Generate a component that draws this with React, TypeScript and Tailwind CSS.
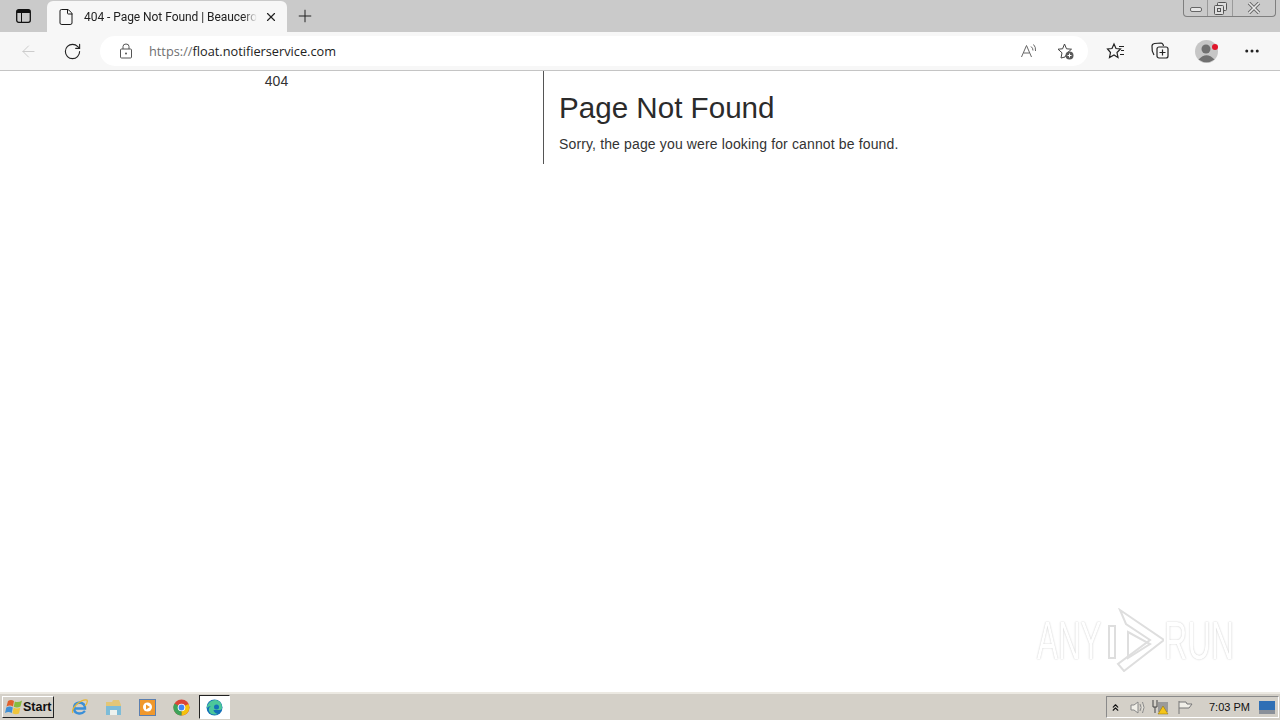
import { RotateCw, ArrowLeft, X, Plus, File, MoreHorizontal, ChevronsUp } from "lucide-react";

function StartFlag() {
  return (
    <svg className="shrink-0" width="17" height="16" viewBox="0 0 17 16" aria-hidden>
      <path d="M3 2 Q6 0 9 2 L8 7.500 Q5 5.500 1.500 7.500 Z" fill="#e0602c" />
      <path d="M9.800 2.500 Q13 4 17 1.500 L15.500 7.500 Q12 9.500 8.800 7.800 Z" fill="#86bb3f" />
      <path d="M1.300 8.500 Q5 6.500 7.800 8.500 L6.800 14 Q3.500 12 0 14 Z" fill="#3f8fd6" />
      <path d="M8.600 8.800 Q12 10.500 15.300 8.500 L14 14.500 Q10.500 16 7.500 14.300 Z" fill="#efc53c" />
    </svg>
  );
}

function WindowControls() {
  return (
    <div className="ml-auto mr-[4px] flex h-[17px] items-center self-start rounded-b-[4px] border border-t-0 border-[#7f7f7f]">
      <div className="flex h-full w-[24px] items-center justify-center border-r border-[#9a9a9a]">
        <span className="mt-[2px] h-[5px] w-[12px] rounded-[2px] border border-[#666] bg-[#e6e6e6]" />
      </div>
      <div className="flex h-full w-[25px] items-center justify-center border-r border-[#9a9a9a]">
        <svg width="13" height="13" viewBox="0 0 13 13" fill="#dedede" stroke="#555" aria-hidden>
          <rect x="3.500" y="0.500" width="9" height="8" rx="1" />
          <rect x="0.500" y="3.500" width="9" height="9" rx="1" />
          <rect x="3.500" y="6.500" width="3" height="3" />
        </svg>
      </div>
      <div className="flex h-full w-[42px] items-center justify-center">
        <svg width="14" height="12" viewBox="0 0 14 12" fill="none" aria-hidden>
          <path d="M2 1 L12 11 M12 1 L2 11" stroke="#666" strokeWidth="3.400" />
          <path d="M2 1 L12 11 M12 1 L2 11" stroke="#e8e8e8" strokeWidth="1.600" />
        </svg>
      </div>
    </div>
  );
}

function BrowserBar() {
  return (
    <div className="h-[71px] shrink-0 border-b border-[#c4c4c4] bg-[#f7f7f7]">
      <div className="flex h-8 items-end bg-[#cacaca]">
        <div className="flex h-8 w-[47px] items-center justify-center">
          <svg width="15" height="14" viewBox="0 0 15 14" fill="none" stroke="#111" aria-hidden>
            <rect x="0.700" y="0.700" width="13.600" height="12.600" rx="2" strokeWidth="1.300" />
            <path d="M1 2.500 H14" strokeWidth="3" />
            <path d="M5.500 3 V13" />
          </svg>
        </div>
        <div className="flex h-[31px] w-[240px] items-center rounded-t-md bg-[#f7f7f7] pl-[10px] pr-[9px]">
          <File size={18} strokeWidth={1.3} className="shrink-0 text-[#111]" />
          <span className="ml-[9px] w-[173px] overflow-hidden text-[12px] tracking-[-0.05px] whitespace-nowrap text-[#222] font-['Roboto',sans-serif] [mask-image:linear-gradient(90deg,#000_92%,transparent)]">
            404 - Page Not Found | Beaucero
          </span>
          <X size={14} strokeWidth={2} className="ml-auto text-[#222]" />
        </div>
        <div className="flex h-8 w-[36px] items-center justify-center">
          <Plus size={20} strokeWidth={1.2} className="text-[#222]" />
        </div>
        <WindowControls />
      </div>
      <div className="flex h-[38px] items-center">
        <div className="flex w-[100px] items-center">
          <ArrowLeft size={19} strokeWidth={1.2} className="ml-[19px] text-[#c9c9c9]" />
          <RotateCw size={19} strokeWidth={1.4} className="ml-[25px] text-[#222]" />
        </div>
        <div className="flex h-[30px] w-[988px] items-center rounded-full bg-white pl-[19px] pr-[13px]">
          <svg width="14" height="16" viewBox="0 0 14 16" fill="none" stroke="#555" aria-hidden>
            <rect x="1.500" y="6" width="11" height="9" rx="1" />
            <path d="M4 6 V3.500 Q4 1 7 1 Q10 1 10 3.500 V6" />
            <circle cx="7" cy="10.500" r="1" fill="#555" stroke="none" />
          </svg>
          <span className="ml-[16px] mt-[2px] text-[12.75px] text-[#222] font-['Open_Sans',sans-serif]">
            <span className="text-[#6f6f6f]">https://</span>float.notifierservice.com
          </span>
          <svg className="ml-auto" width="18" height="16" viewBox="0 0 18 16" fill="none" stroke="#666" strokeWidth="1" aria-hidden>
            <path d="M1.500 14 L6.500 2.500 L11.500 14 M3.500 10 H9.500 M11 3.500 Q13 5 13 7.500 M13.500 1.500 Q16 4 15.500 8" />
          </svg>
          <svg className="ml-[18px]" width="19" height="19" viewBox="0 0 19 19" fill="none" stroke="#444" strokeWidth="1" aria-hidden>
            <path d="M8.500 2 L10.500 6.800 L15.500 7.200 L11.700 10.500 L9 15 L5 16 L6 10.800 L2 7.200 L6.600 6.800 Z" />
            <circle cx="13.500" cy="13.500" r="4" fill="#5a5a5a" stroke="none" />
            <path d="M13.500 11.500 V15.500 M11.500 13.500 H15.500" stroke="#fff" />
          </svg>
        </div>
        <div className="flex flex-1 items-center">
          <svg className="ml-[18px]" width="20" height="18" viewBox="0 0 20 18" fill="none" stroke="#222" strokeWidth="1.200" aria-hidden>
            <path d="M8 2 L10 6.500 L14.500 7 L11 10.500 L12 15.500 L8 13 L3.500 15.500 L4.500 10.500 L1.500 7 L6 6.500 Z" />
            <path d="M13 4.500 H18 M15 8.500 H18 M14 12.500 H18" />
          </svg>
          <svg className="ml-[24px]" width="20" height="18" viewBox="0 0 20 18" fill="none" stroke="#222" strokeWidth="1.200" aria-hidden>
            <path d="M4 13 Q1.500 9 2 4 Q2 2 4.500 1.500 L11 1 Q13 1 13.500 4" />
            <rect x="7" y="5" width="11" height="11" rx="2" />
            <path d="M12.500 7.500 V13.500 M9.500 10.500 H15.500" />
          </svg>
          <div className="relative ml-[25px] flex h-[23px] w-[23px] items-center justify-center rounded-full bg-[#c6c6c6]">
            <svg width="23" height="23" viewBox="0 0 23 23" aria-hidden>
              <circle cx="11" cy="9" r="4.500" fill="#707070" />
              <path d="M3.500 19.500 Q11.500 11 19.500 19.500 Q11.500 25 3.500 19.500 Z" fill="#707070" />
            </svg>
            <span className="absolute top-[4px] right-[0px] h-[6px] w-[6px] rounded-full bg-[#e0162b]" />
          </div>
          <MoreHorizontal size={18} strokeWidth={2} className="ml-[25px] text-[#222]" />
        </div>
      </div>
    </div>
  );
}

function NotFound() {
  return (
    <div className="flex flex-1 items-start bg-white font-['Liberation_Sans',sans-serif]">
      <div className="w-[543px] pt-[2px] pl-[10px] text-center text-[14px] leading-[16px] text-[#333]">404</div>
      <div className="h-[93px] w-[737px] border-l border-[#555] pt-[19px] pl-[15px]">
        <h1 className="text-[29.6px] leading-[36px] text-[#2b2b2b]">Page Not Found</h1>
        <p className="mt-[8px] text-[14px] leading-[20px] tracking-[0.14px] text-[#333]">
          Sorry, the page you were looking for cannot be found.
        </p>
      </div>
    </div>
  );
}

function Watermark() {
  return (
    <div className="pointer-events-none absolute top-[608px] left-[1037px] flex h-[64px] items-center font-['Liberation_Sans',sans-serif] text-[54px] leading-none text-white [text-shadow:0_0_2px_#bdbdbd]">
      <span className="w-[67px] origin-left scale-x-[0.58] whitespace-nowrap">ANY</span>
      <svg width="60" height="64" viewBox="0 0 60 64" fill="none" stroke="#dedede" strokeWidth="2" aria-hidden>
        <path d="M16 2 L60 32 L20 63 L14 56 L46 32 L22 16 Z" />
        <path d="M24 24 L46 36 L24 50 Z" />
        <path d="M5 18 H11 V50 H5 Z" />
      </svg>
      <span className="w-[70px] origin-left scale-x-[0.6] whitespace-nowrap">RUN</span>
    </div>
  );
}

function Taskbar() {
  return (
    <div className="flex h-[28px] shrink-0 items-center border-t-2 border-[#ece9e2] bg-[#d4d0c8] font-['Liberation_Sans',sans-serif]">
      <div className="ml-[2px] flex h-[22px] w-[52px] items-center gap-px border border-t-white border-r-[#222] border-b-[#222] border-l-white pl-[2px] text-[12.5px] font-bold text-[#111]">
        <StartFlag />
        Start
      </div>
      <div className="ml-[17px] flex items-center gap-[17px]">
        <svg width="17" height="17" viewBox="0 0 17 17" fill="none" aria-hidden>
          <path d="M14 12 Q11 15 8 14.500 Q3 14 3 9 Q3 4 8.500 3.500 Q14 4 14 9.500 H4" stroke="#3a8fd8" strokeWidth="2.400" />
          <path d="M2 14 Q0 11 6 5 Q12 0 16 1 Q17 4 14 7" stroke="#e8b530" strokeWidth="1.200" />
        </svg>
        <svg width="17" height="17" viewBox="0 0 17 17" aria-hidden>
          <path d="M1 3 H7 L8 1 H14 L16 6 V16 H1 Z" fill="#e3c677" />
          <path d="M1 7 H16 V16 H12 V11 H5 V16 H1 Z" fill="#7dbcd8" />
          <path d="M5 11 H12 V16 H5 Z" fill="#eef2ee" />
        </svg>
        <div className="flex h-[17px] w-[17px] items-center justify-center border border-[#5b7fb0] bg-[#f0982c]">
          <svg width="9" height="10" viewBox="0 0 9 10" aria-hidden>
            <circle cx="4.500" cy="5" r="4.500" fill="#fff" />
            <path d="M3 2.500 L7 5 L3 7.500 Z" fill="#f0982c" />
          </svg>
        </div>
        <svg width="17" height="17" viewBox="0 0 17 17" aria-hidden>
          <circle cx="8.500" cy="8.500" r="8" fill="#db4437" />
          <path d="M8.500 8.500 L15.500 5 A8 8 0 0 1 8.500 16.500 Z" fill="#f4c20d" />
          <path d="M8.500 8.500 L8.500 16.500 A8 8 0 0 1 1.500 4.500 Z" fill="#3da35a" />
          <circle cx="8.500" cy="8.500" r="3.800" fill="#fff" />
          <circle cx="8.500" cy="8.500" r="2.900" fill="#4285f4" />
        </svg>
      </div>
      <div className="ml-[9px] flex h-[24px] w-[31px] items-center justify-center border border-t-[#222] border-r-white border-b-white border-l-[#222] bg-white">
        <svg width="17" height="17" viewBox="0 0 17 17" aria-hidden>
          <circle cx="8.500" cy="8.500" r="8" fill="#1470b8" />
          <path d="M1 7 Q4 0.500 10 1 Q16 2 16 9 Q16 11 13 11 L7.500 11 Q8 14 12 15 Q5 17 3 12 Q2 9 5 7 Q3 7 1 9 Z" fill="#4cc79a" />
          <circle cx="10.500" cy="8" r="2.500" fill="#1470b8" />
        </svg>
      </div>
      <div className="mr-[1px] ml-auto flex h-[22px] w-[173px] items-center border border-t-[#8a8a8a] border-r-white border-b-white border-l-[#8a8a8a] text-[#333]">
        <ChevronsUp size={11} strokeWidth={2.5} className="ml-[3px] text-[#111]" />
        <svg className="ml-[8px]" width="17" height="15" viewBox="0 0 17 15" fill="#f1efe8" stroke="#888" aria-hidden>
          <path d="M2 5 H5 L9 2 V13 L5 10 H2 Z M11 4 Q13 7.500 11 11 M13.500 2 Q16.500 7.500 13.500 13" />
        </svg>
        <svg className="ml-[6px]" width="17" height="16" viewBox="0 0 17 16" aria-hidden>
          <rect x="6" y="3" width="10" height="10" fill="#9a9a9a" />
          <path d="M1 1 V8 H5 V1 M3 8 V14" stroke="#444" fill="none" />
          <path d="M11 7 L16 15 H6 Z" fill="#f5c518" stroke="#8a6d00" strokeWidth="0.500" />
        </svg>
        <svg className="ml-[8px]" width="17" height="15" viewBox="0 0 17 15" fill="#f1efe8" stroke="#777" aria-hidden>
          <path d="M2 1 V14 M2 2 H9 L10 4 H15 L12 8 H2" />
        </svg>
        <span className="ml-[15px] text-[11px] text-[#111]">7:03 PM</span>
        <svg className="ml-auto mr-[3px]" width="16" height="13" viewBox="0 0 16 13" aria-hidden>
          <rect width="16" height="13" fill="#2f6fb5" />
          <rect y="9" width="16" height="4" fill="#8a9099" />
        </svg>
      </div>
    </div>
  );
}

export default function App() {
  return (
    <div className="relative flex h-[720px] w-[1280px] flex-col overflow-hidden bg-white">
      <BrowserBar />
      <NotFound />
      <Watermark />
      <Taskbar />
    </div>
  );
}
